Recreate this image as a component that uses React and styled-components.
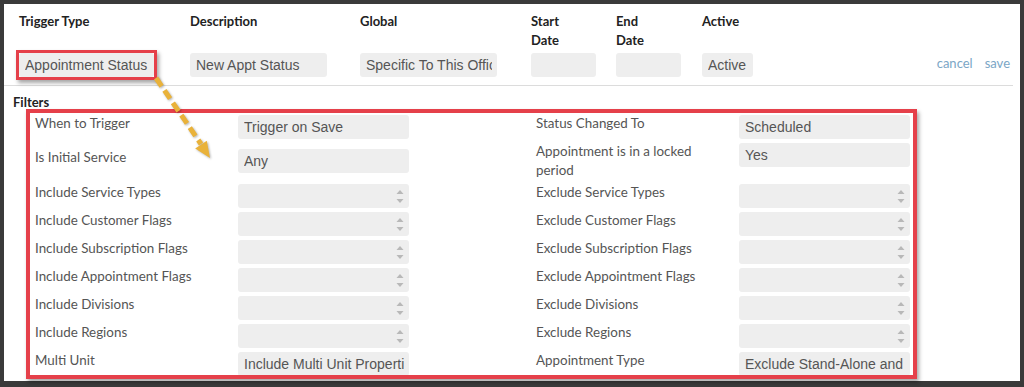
import React from 'react'
import styled, { createGlobalStyle } from 'styled-components'

const GlobalStyle = createGlobalStyle`
    html, body {
        margin: 0;
        padding: 0;
        background: #3a3a3a;
    }
    * {
        box-sizing: border-box;
    }
`

const leftFilters = [
    { label: 'When to Trigger', value: 'Trigger on Save', h: 34 },
    { label: 'Is Initial Service', value: 'Any', h: 35 },
    { label: 'Include Service Types', multi: true },
    { label: 'Include Customer Flags', multi: true },
    { label: 'Include Subscription Flags', multi: true },
    { label: 'Include Appointment Flags', multi: true },
    { label: 'Include Divisions', multi: true },
    { label: 'Include Regions', multi: true },
    { label: 'Multi Unit', value: 'Include Multi Unit Properties' },
]

const rightFilters = [
    { label: 'Status Changed To', value: 'Scheduled', h: 28 },
    { label: 'Appointment is in a locked period', value: 'Yes', h: 41 },
    { label: 'Exclude Service Types', multi: true },
    { label: 'Exclude Customer Flags', multi: true },
    { label: 'Exclude Subscription Flags', multi: true },
    { label: 'Exclude Appointment Flags', multi: true },
    { label: 'Exclude Divisions', multi: true },
    { label: 'Exclude Regions', multi: true },
    { label: 'Appointment Type', value: 'Exclude Stand-Alone and Recurring' },
]

function Spinner() {
    return (
        <SpinIcon width="8" height="15" viewBox="0 0 8 15">
            <path d="M0.5 5 L4 1 L7.5 5 Z" fill="#b8b8b8" />
            <path d="M0.5 10 L4 14 L7.5 10 Z" fill="#b8b8b8" />
        </SpinIcon>
    )
}

function FilterColumn({ rows }) {
    return (
        <Column>
            {rows.map(row => (
                <FilterRow key={row.label} $h={row.h || 28}>
                    <FilterLabel>{row.label}</FilterLabel>
                    <Field $w={171}>
                        <FieldText>{row.value || ''}</FieldText>
                        {row.multi && <Spinner />}
                    </Field>
                </FilterRow>
            ))}
        </Column>
    )
}

export default function App() {
    return (
        <Frame>
            <GlobalStyle />
            <Panel>
                <HeaderGrid>
                    <HeadLabel>Trigger Type</HeadLabel>
                    <HeadLabel>Description</HeadLabel>
                    <HeadLabel>Global</HeadLabel>
                    <HeadLabel>Start<br />Date</HeadLabel>
                    <HeadLabel>End<br />Date</HeadLabel>
                    <HeadLabel>Active</HeadLabel>
                    <span />

                    <Highlight>
                        <Field $w={135}>
                            <FieldText>Appointment Status</FieldText>
                        </Field>
                    </Highlight>
                    <Field $w={137}>
                        <FieldText>New Appt Status</FieldText>
                    </Field>
                    <Field $w={137}>
                        <FieldText>Specific To This Office</FieldText>
                    </Field>
                    <Field $w={65} />
                    <Field $w={65} />
                    <Field $w={51}>
                        <FieldText>Active</FieldText>
                    </Field>
                    <Actions>
                        <ActionLink href="#">cancel</ActionLink>
                        <ActionLink href="#">save</ActionLink>
                    </Actions>
                </HeaderGrid>

                <Divider />

                <SectionTitle>Filters</SectionTitle>
                <FilterBox>
                    <FilterColumn rows={leftFilters} />
                    <FilterColumn rows={rightFilters} />
                </FilterBox>

                <Arrow width="90" height="100" viewBox="0 0 90 100">
                    <line x1="12" y1="9" x2="57" y2="75" stroke="#e9b23a" strokeWidth="5" strokeDasharray="10 5" />
                    <path d="M66 89 L62.8 71.8 L51.2 79.6 Z" fill="#e9b23a" />
                </Arrow>
            </Panel>
        </Frame>
    )
}

const Frame = styled.div`
    height: 387px;
    padding: 4px 4px 6px 4px;
    background: #3a3a3a;
`

const Panel = styled.div`
    position: relative;
    height: 100%;
    background: #fff;
    font-family: Lato, "Open Sans", sans-serif;
`

const HeaderGrid = styled.div`
    display: grid;
    grid-template-columns: 171px 170px 171px 85px 86px 1fr auto;
    grid-template-rows: 41px 24px;
    align-items: start;
    padding: 8px 10px 0 15px;
`

const HeadLabel = styled.div`
    font-size: 13px;
    font-weight: 700;
    line-height: 19px;
    color: #222;
`

const Highlight = styled.div`
    width: fit-content;
    margin: -3px;
    border: 3px solid #e5404a;
    box-shadow: 2px 3px 4px rgba(0, 0, 0, 0.35);
`

const Field = styled.div`
    display: flex;
    align-items: center;
    justify-content: space-between;
    width: ${p => p.$w}px;
    height: 24px;
    padding: 0 5px 0 6px;
    background: #eeeeee;
    border-radius: 3px;
    overflow: hidden;
`

const FieldText = styled.span`
    flex: 1;
    min-width: 0;
    overflow: hidden;
    white-space: nowrap;
    font-family: "Liberation Sans", Arial, sans-serif;
    font-size: 14px;
    color: #555;
`

const SpinIcon = styled.svg`
    flex: none;
    margin-left: 4px;
`

const Actions = styled.div`
    display: flex;
    gap: 12px;
    align-self: center;
    margin-top: -4px;
`

const ActionLink = styled.a`
    font-size: 13px;
    color: #7ba6c6;
    text-decoration: none;
`

const Divider = styled.div`
    height: 1px;
    margin: 8px 7px 0 0;
    background: #dcdcdc;
`

const SectionTitle = styled.div`
    padding-left: 9px;
    margin-top: 8px;
    font-size: 13px;
    font-weight: 700;
    line-height: 16px;
    color: #222;
`

const FilterBox = styled.div`
    display: grid;
    grid-template-columns: 374px 374px;
    column-gap: 127px;
    width: 891px;
    height: 270px;
    margin: -1px 0 0 22px;
    padding: 2px 0 0 5px;
    border: 4px solid #e5404a;
    box-shadow: 2px 3px 4px rgba(0, 0, 0, 0.35);
    overflow: hidden;
`

const Column = styled.div`
    display: flex;
    flex-direction: column;
`

const FilterRow = styled.div`
    display: flex;
    align-items: flex-start;
    flex: none;
    height: ${p => p.$h}px;
`

const FilterLabel = styled.div`
    width: 203px;
    flex: none;
    margin-top: -1px;
    padding-right: 30px;
    font-size: 13.4px;
    line-height: 19px;
    color: #555;
`

const Arrow = styled.svg`
    position: absolute;
    left: 140px;
    top: 65px;
    filter: drop-shadow(1px 1px 1px rgba(0, 0, 0, 0.3));
`
